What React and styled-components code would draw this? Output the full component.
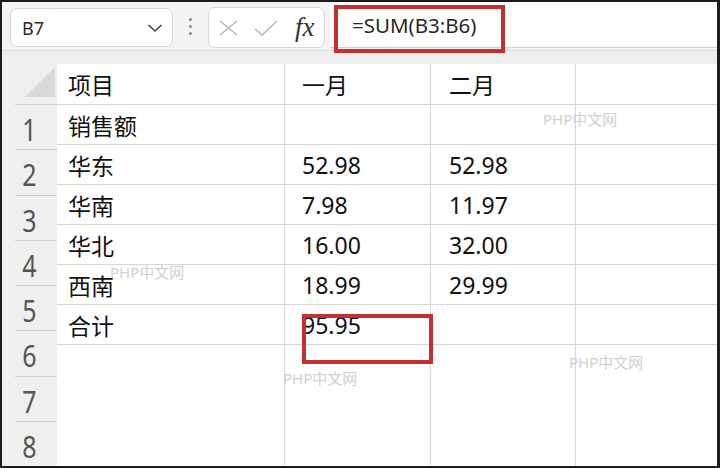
import React from "react";
import styled, { createGlobalStyle } from "styled-components";

const Global = createGlobalStyle`
  html, body { margin: 0; padding: 0; background: #fff; }
  * { box-sizing: border-box; }
`;

const Frame = styled.div`
  position: relative;
  width: 720px;
  height: 468px;
  overflow: hidden;
  border-style: solid;
  border-color: #1c1c1c;
  border-width: 2px 3px 2px 2px;
  background: #f2f2f2;
  display: flex;
  flex-direction: column;
  font-family: "Noto Sans", "Noto Sans CJK SC", sans-serif;
`;

const FormulaBar = styled.div`
  height: 48px;
  display: flex;
  align-items: flex-start;
  padding-left: 8px;
  background: #f3f3f3;
`;

const NameBox = styled.div`
  margin-top: 6px;
  width: 163px;
  height: 39px;
  background: #fff;
  border: 1px solid #d6d6d6;
  border-radius: 7px;
  display: flex;
  align-items: center;
  justify-content: space-between;
  padding: 0 9px 0 11px;
  font-size: 18px;
  color: #2b2b2b;
`;

const Dots = styled.div`
  width: 35px;
  height: 48px;
  display: flex;
  flex-direction: column;
  align-items: center;
  justify-content: center;
  gap: 4px;
  span {
    width: 3px;
    height: 3px;
    border-radius: 50%;
    background: #8a8a8a;
  }
`;

const FuncBox = styled.div`
  margin-top: 5px;
  width: 117px;
  height: 41px;
  background: #fff;
  border: 1px solid #d6d6d6;
  border-radius: 7px;
  display: flex;
  align-items: center;
  padding-left: 9px;
  gap: 15px;
`;

const Fx = styled.span`
  font-family: "Liberation Serif", "DejaVu Serif", serif;
  font-style: italic;
  font-size: 27px;
  color: #333;
  margin-left: 2px;
  line-height: 1;
`;

const FormulaInput = styled.div`
  flex: 1;
  margin-left: 5px;
  height: 46px;
  background: #fff;
  border-bottom: 1px solid #d0d0d0;
  display: flex;
  align-items: center;
  padding-left: 22px;
  font-size: 20.5px;
  color: #262626;
`;

const HeaderBand = styled.div`
  height: 14px;
  background: #efefef;
  border-top: 1px solid #dcdcdc;
`;

const Sheet = styled.div`
  flex: 1;
  display: flex;
  min-height: 0;
`;

const RowHeaderCol = styled.div`
  width: 55px;
  background: #efefef;
  display: flex;
  flex-direction: column;
`;

const Corner = styled.div`
  height: 40px;
  svg { display: block; }
`;

const RowHead = styled.div`
  height: 45.3px;
  margin-left: 13px;
  border-top: 1px solid #cfcfcf;
  display: flex;
  align-items: center;
  justify-content: center;
  padding: 4px 13px 0 0;
  color: #555;
  font-size: 25px;
  span {
    display: inline-block;
    transform: scaleY(1.2);
  }
`;

const Grid = styled.div`
  flex: 1;
  background: #fff;
  display: flex;
  flex-direction: column;
`;

const cols = "228px 146px 145px 1fr";

const Row = styled.div`
  display: grid;
  grid-template-columns: ${cols};
  height: ${(p) => (p.$first ? 41 : 40)}px;
  border-bottom: 1px solid #d6d6d6;
`;

const Filler = styled.div`
  flex: 1;
  display: grid;
  grid-template-columns: ${cols};
`;

const Cell = styled.div`
  border-right: 1px solid #d6d6d6;
  display: flex;
  align-items: center;
  padding-left: ${(p) => p.$pad}px;
  font-size: 23px;
  color: #111;
  white-space: nowrap;
  &:last-child { border-right: none; }
`;

const EmptyCol = styled.div`
  border-right: 1px solid #d6d6d6;
  &:last-child { border-right: none; }
`;

const Highlight = styled.div`
  position: absolute;
  border: 4px solid #c4302f;
  pointer-events: none;
`;

const Watermark = styled.div`
  position: absolute;
  font-size: 15px;
  color: #d0d0d0;
  white-space: nowrap;
  pointer-events: none;
`;

const pads = [11, 17, 18, 0];

const data = [
  ["项目", "一月", "二月", ""],
  ["销售额", "", "", ""],
  ["华东", "52.98", "52.98", ""],
  ["华南", "7.98", "11.97", ""],
  ["华北", "16.00", "32.00", ""],
  ["西南", "18.99", "29.99", ""],
  ["合计", "95.95", "", ""],
];

export default function App() {
  return (
    <>
      <Global />
      <Frame>
        <FormulaBar>
          <NameBox>
            <span>B7</span>
            <svg width="16" height="10" viewBox="0 0 16 10">
              <path d="M1.5 2 L8 8 L14.5 2" fill="none" stroke="#444" strokeWidth="1.6" />
            </svg>
          </NameBox>
          <Dots>
            <span />
            <span />
            <span />
          </Dots>
          <FuncBox>
            <svg width="21" height="16" viewBox="0 0 21 16">
              <path d="M2 1 L19 15 M19 1 L2 15" stroke="#b4b4b4" strokeWidth="1.4" fill="none" />
            </svg>
            <svg width="24" height="16" viewBox="0 0 24 16">
              <path d="M1 9 L8 15 L23 1" stroke="#b4b4b4" strokeWidth="1.4" fill="none" />
            </svg>
            <Fx>fx</Fx>
          </FuncBox>
          <FormulaInput>=SUM(B3:B6)</FormulaInput>
        </FormulaBar>
        <HeaderBand />
        <Sheet>
          <RowHeaderCol>
            <Corner>
              <svg width="55" height="40" viewBox="0 0 55 40">
                <polygon points="53,3 53,33 23,33" fill="#d9d9d9" />
              </svg>
            </Corner>
            {[1, 2, 3, 4, 5, 6, 7, 8].map((n) => (
              <RowHead key={n}>
                <span>{n}</span>
              </RowHead>
            ))}
          </RowHeaderCol>
          <Grid>
            {data.map((r, i) => (
              <Row key={i} $first={i === 0}>
                {r.map((c, j) => (
                  <Cell key={j} $pad={pads[j]}>
                    {c}
                  </Cell>
                ))}
              </Row>
            ))}
            <Filler>
              <EmptyCol />
              <EmptyCol />
              <EmptyCol />
              <EmptyCol />
            </Filler>
          </Grid>
        </Sheet>
        <Highlight style={{ left: 332, top: 3, width: 171, height: 48 }} />
        <Highlight style={{ left: 300, top: 312, width: 131, height: 50 }} />
        <Watermark style={{ left: 541, top: 106 }}>PHP中文网</Watermark>
        <Watermark style={{ left: 108, top: 259 }}>PHP中文网</Watermark>
        <Watermark style={{ left: 281, top: 365 }}>PHP中文网</Watermark>
        <Watermark style={{ left: 567, top: 349 }}>PHP中文网</Watermark>
      </Frame>
    </>
  );
}
